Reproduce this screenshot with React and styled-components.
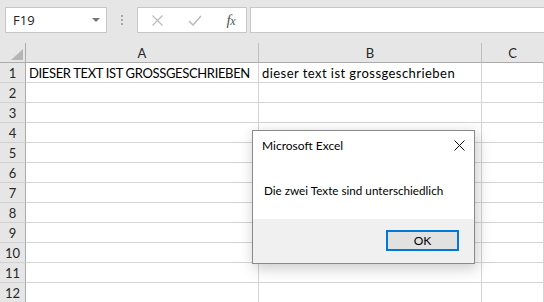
import React from "react";
import styled, { createGlobalStyle } from "styled-components";

const GlobalStyle = createGlobalStyle`
  html, body {
    margin: 0;
    padding: 0;
    background: #ffffff;
    overflow: hidden;
  }
`;

const Page = styled.div`
  position: relative;
  width: 544px;
  height: 302px;
  overflow: hidden;
  font-family: Lato, "Liberation Sans", sans-serif;
`;

/* ---- formula bar ---- */
const FormulaBar = styled.div`
  height: 43px;
  box-sizing: border-box;
  background: #e6e6e6;
  display: flex;
  align-items: flex-start;
  padding: 7px 0 0 5px;
`;

const Field = styled.div`
  box-sizing: border-box;
  height: 26px;
  background: #ffffff;
  border: 1px solid #c6c6c6;
  display: flex;
  align-items: center;
`;

const NameBox = styled(Field)`
  width: 102px;
  padding: 0 6px 0 7px;
  justify-content: space-between;
  font-family: "Open Sans", "Noto Sans", sans-serif;
  font-size: 13px;
  color: #222;
`;

const Caret = styled.span`
  width: 0;
  height: 0;
  border-left: 4px solid transparent;
  border-right: 4px solid transparent;
  border-top: 4px solid #767676;
`;

const Grip = styled.div`
  width: 30px;
  height: 26px;
  display: flex;
  flex-direction: column;
  align-items: center;
  justify-content: center;
  gap: 2px;
`;

const GripDot = styled.span`
  width: 2px;
  height: 2px;
  background: #a8a8a8;
`;

const FxBox = styled(Field)`
  width: 110px;
  padding: 0 11px 0 14px;
  justify-content: space-between;
`;

const Fx = styled.span`
  font-family: "Liberation Serif", serif;
  font-style: italic;
  font-size: 15px;
  color: #555;
  letter-spacing: -0.5px;
  & > small {
    font-size: 12px;
  }
`;

const FormulaInput = styled(Field)`
  flex: 1;
  margin-left: 3px;
  border-right: none;
`;

/* ---- sheet grid ---- */
const Sheet = styled.div`
  display: grid;
  grid-template-columns: 26px 233px 223px 1fr;
`;

const ColHead = styled.div`
  box-sizing: border-box;
  height: 20px;
  background: #e6e6e6;
  border-bottom: 1px solid #ababab;
  border-right: 1px solid ${(p) => (p.$last ? "transparent" : "#c0c0c0")};
  display: flex;
  align-items: center;
  justify-content: center;
  font-size: 13px;
  color: #262626;
`;

const Corner = styled(ColHead)`
  position: relative;
  border-right-color: #ababab;
`;

const CornerMark = styled.span`
  position: absolute;
  right: 2px;
  bottom: 2px;
  width: 0;
  height: 0;
  border-left: 12px solid transparent;
  border-bottom: 11px solid #b5b5b5;
`;

const RowHead = styled.div`
  box-sizing: border-box;
  height: 20px;
  background: #e6e6e6;
  border-right: 1px solid #ababab;
  border-bottom: 1px solid #d0d0d0;
  display: flex;
  align-items: center;
  justify-content: center;
  font-size: 13px;
  color: #262626;
`;

const Cell = styled.div`
  box-sizing: border-box;
  height: 20px;
  border-right: 1px solid #d4d4d4;
  border-bottom: 1px solid #d4d4d4;
  padding: 0 3px;
  display: flex;
  align-items: center;
  white-space: nowrap;
  overflow: visible;
  font-size: 13px;
  letter-spacing: ${(p) => p.$tracking || 0}px;
  color: #000;
`;

/* ---- message box ---- */
const Dialog = styled.div`
  position: absolute;
  left: 252px;
  top: 130px;
  width: 223px;
  height: 134px;
  box-sizing: border-box;
  border: 1px solid #8a8a8a;
  background: #ffffff;
  box-shadow: 2px 4px 14px rgba(0, 0, 0, 0.22);
  display: flex;
  flex-direction: column;
  font-family: Lato, "Liberation Sans", sans-serif;
`;

const TitleBar = styled.div`
  height: 29px;
  display: flex;
  align-items: center;
  justify-content: space-between;
  padding: 0 9px 0 9px;
  font-size: 12px;
  color: #000;
`;

const CloseIcon = () => (
  <svg width="11" height="11" viewBox="0 0 11 11">
    <path d="M0.5 0.5 L10.5 10.5 M10.5 0.5 L0.5 10.5" stroke="#111" strokeWidth="1" fill="none" />
  </svg>
);

const Message = styled.div`
  flex: 1;
  display: flex;
  align-items: center;
  padding: 0 0 0 11px;
  font-size: 11.7px;
  color: #000;
`;

const Footer = styled.div`
  height: 44px;
  background: #f0f0f0;
  display: flex;
  justify-content: flex-end;
  align-items: flex-start;
  padding: 11px 15px 0 0;
  box-sizing: border-box;
`;

const Button = styled.button`
  width: 73px;
  height: 21px;
  box-sizing: border-box;
  border: 2px solid #0078d7;
  background: #e1e1e1;
  font-family: Lato, "Liberation Sans", sans-serif;
  font-size: 12px;
  color: #000;
  padding: 0;
`;

const columns = ["A", "B", "C"];
const rows = Array.from({ length: 12 }, (_, i) => i + 1);
const data = {
  1: [
    { text: "DIESER TEXT IST GROSSGESCHRIEBEN", tracking: -0.35 },
    { text: "dieser text ist grossgeschrieben", tracking: 0.45 },
    { text: "" },
  ],
};

export default function App() {
  return (
    <Page>
      <GlobalStyle />
      <FormulaBar>
        <NameBox>
          <span>F19</span>
          <Caret />
        </NameBox>
        <Grip>
          <GripDot />
          <GripDot />
          <GripDot />
        </Grip>
        <FxBox>
          <svg width="11" height="11" viewBox="0 0 11 11">
            <path d="M0.5 0.5 L10.5 10.5 M10.5 0.5 L0.5 10.5" stroke="#bdbdbd" strokeWidth="1.3" fill="none" />
          </svg>
          <svg width="14" height="11" viewBox="0 0 14 11">
            <path d="M1 6 L5 10 L13 1" stroke="#bdbdbd" strokeWidth="1.6" fill="none" />
          </svg>
          <Fx>
            f<small>x</small>
          </Fx>
        </FxBox>
        <FormulaInput />
      </FormulaBar>

      <Sheet>
        <Corner>
          <CornerMark />
        </Corner>
        {columns.map((c, i) => (
          <ColHead key={c} $last={i === columns.length - 1}>
            {c}
          </ColHead>
        ))}
        {rows.map((r) => (
          <React.Fragment key={r}>
            <RowHead>{r}</RowHead>
            {columns.map((c, i) => {
              const cell = data[r] ? data[r][i] : null;
              return (
                <Cell key={c} $tracking={cell ? cell.tracking : 0}>
                  {cell ? cell.text : ""}
                </Cell>
              );
            })}
          </React.Fragment>
        ))}
      </Sheet>

      <Dialog>
        <TitleBar>
          <span>Microsoft Excel</span>
          <CloseIcon />
        </TitleBar>
        <Message>Die zwei Texte sind unterschiedlich</Message>
        <Footer>
          <Button>OK</Button>
        </Footer>
      </Dialog>
    </Page>
  );
}
